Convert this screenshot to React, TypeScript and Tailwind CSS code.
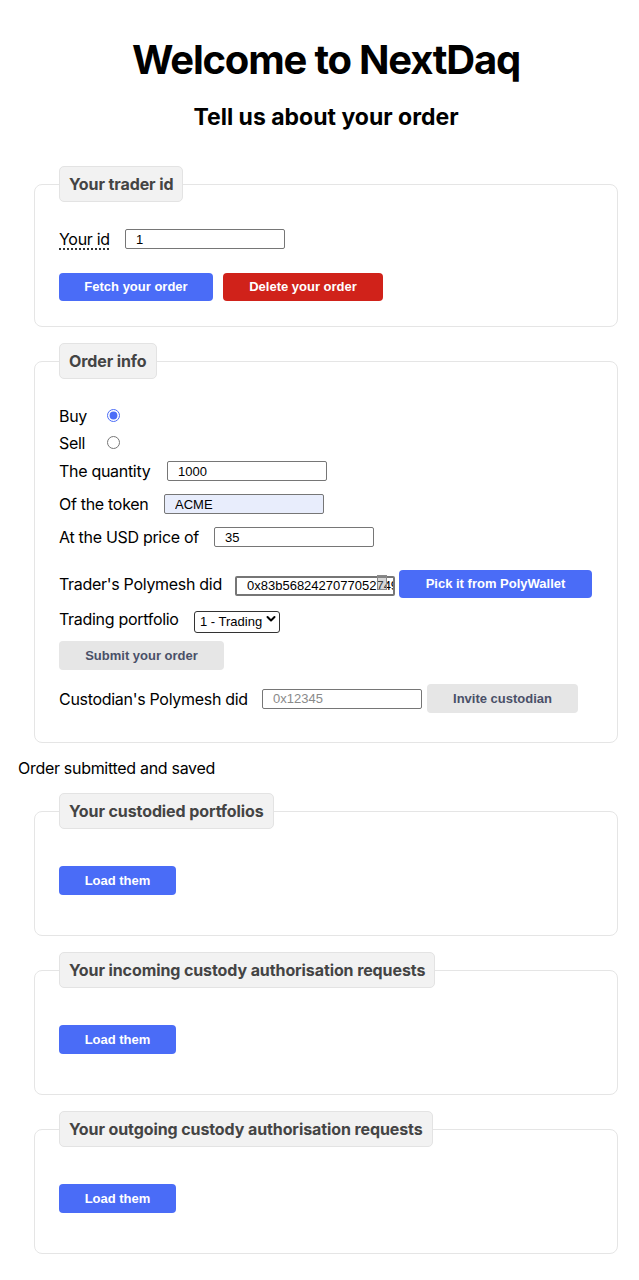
import { ReactNode } from "react";

const inputFont = "font-['Liberation_Sans',Arial,sans-serif] tracking-normal";
const field = `h-[20px] w-[160px] border border-[#767676] rounded-[2px] pl-[10px] text-[13px] text-black outline-none ${inputFont}`;
const btn = `h-[28px] rounded-[4px] text-[13px] font-bold ${inputFont}`;
const primary = `${btn} bg-[#4a6cf7] text-white`;
const muted = `${btn} bg-[#e6e6e6] text-[#4a5068]`;

function Box({ title, children }: { title: string; children: ReactNode }) {
  return (
    <fieldset className="ml-[34px] mr-[21px] mt-[16px] border border-[#e5e5e5] rounded-[8px] px-6">
      <legend className="px-[9px] py-[5px] bg-[#f2f2f2] border border-[#e3e3e3] rounded-[5px] text-[16px] leading-6 font-bold text-[#444] tracking-[-0.1px]">
        {title}
      </legend>
      {children}
    </fieldset>
  );
}

function LoadBox({ title }: { title: string }) {
  return (
    <Box title={title}>
      <div className="pt-[37px] pb-[40px]">
        <button className={`${primary} w-[117px] h-[29px]`}>Load them</button>
      </div>
    </Box>
  );
}

export default function App() {
  return (
    <div className="min-h-[1280px] bg-white text-black font-['Inter','Noto_Sans',sans-serif] tracking-[-0.3px] pt-[36px] pb-[26px]">
      {/* ── Headings ─────────────────────────────── */}
      <div className="pl-[13px]">
        <h1 className="text-center text-[40px] leading-[48px] font-bold tracking-[-1.2px]">Welcome to NextDaq</h1>
        <h2 className="mt-[20px] text-center text-[23px] leading-[26px] font-bold tracking-normal">Tell us about your order</h2>
      </div>

      <div className="mt-[36px]">
        <Box title="Your trader id">
          <div className="pt-[25px] pb-[25px]">
            <div className="flex items-center h-[24px]">
              <span className="w-[66px] text-[16px]">
                <span className="underline decoration-dotted underline-offset-[4px]">Your id</span>
              </span>
              <input className={field} defaultValue="1" />
            </div>
            <div className="flex gap-[10px] mt-[22px]">
              <button className={`${primary} w-[154px]`}>Fetch your order</button>
              <button className={`${btn} w-[160px] bg-[#d0221a] text-white`}>Delete your order</button>
            </div>
          </div>
        </Box>
      </div>

      <Box title="Order info">
        <div className="pt-[23px] pb-[29px] text-[16px]">
          <label className="flex items-center h-[27px]">
            <span className="w-[48px]">Buy</span>
            <input type="radio" name="side" defaultChecked className="w-[13px] h-[13px] accent-[#4a6cf7]" />
          </label>
          <label className="flex items-center h-[27px]">
            <span className="w-[48px]">Sell</span>
            <input type="radio" name="side" className="w-[13px] h-[13px] accent-[#4a6cf7]" />
          </label>
          <div className="flex items-center h-[28px] mt-[1px]">
            <span className="w-[108px]">The quantity</span>
            <input className={field} defaultValue="1000" />
          </div>
          <div className="flex items-center h-[28px] mt-[5px]">
            <span className="w-[105px]">Of the token</span>
            <input className={`${field} bg-[#e8edfc]`} defaultValue="ACME" />
          </div>
          <div className="flex items-center h-[28px] mt-[5px]">
            <span className="w-[155px]">At the USD price of</span>
            <input className={field} defaultValue="35" />
          </div>
          <div className="flex items-center h-[28px] mt-[19px]">
            <span className="w-[176px]">Trader's Polymesh did</span>
            <div className="relative">
              <input
                className={`${field} border-2 border-[#111] pl-[9px]`}
                defaultValue="0x83b5682427077052749a1c0e3d"
              />
              <span className="absolute left-[142px] top-[3px] w-[10px] h-[15px] border border-[#8a8a8a] bg-[#9a9a9a]/40" />
            </div>
            <button className={`${primary} w-[193px] ml-[4px]`}>Pick it from PolyWallet</button>
          </div>
          <div className="flex items-center h-[28px] mt-[7px]">
            <span className="w-[135px]">Trading portfolio</span>
            <div className="relative w-[86px] h-[22px]">
              <select className={`appearance-none w-full h-full border border-[#333] rounded-[3px] pl-[5px] bg-white text-[13px] text-black ${inputFont}`}>
                <option>1 - Trading</option>
              </select>
              <svg
                className="absolute right-[4px] top-[7px] pointer-events-none"
                width="10"
                height="8"
                viewBox="0 0 10 8"
                fill="none"
                stroke="#000"
                strokeWidth="2"
                strokeLinecap="round"
                strokeLinejoin="round"
              >
                <path d="M1.5 2 L5 5.5 L8.5 2" />
              </svg>
            </div>
          </div>
          <div className="mt-[8px]">
            <button className={`${muted} w-[165px] h-[29px]`}>Submit your order</button>
          </div>
          <div className="flex items-center h-[29px] mt-[14px]">
            <span className="w-[203px]">Custodian's Polymesh did</span>
            <input className={`${field} placeholder:text-[#8a8a8a]`} placeholder="0x12345" />
            <button className={`${muted} w-[151px] h-[29px] ml-[5px]`}>Invite custodian</button>
          </div>
        </div>
      </Box>

      <p className="ml-[18px] mt-[13px] text-[16px] leading-6">Order submitted and saved</p>

      <div className="mt-[-3px]">
        <LoadBox title="Your custodied portfolios" />
      </div>
      <div className="mt-[1px]">
        <LoadBox title="Your incoming custody authorisation requests" />
        <div className="mt-[1px]">
          <LoadBox title="Your outgoing custody authorisation requests" />
        </div>
      </div>
    </div>
  );
}
